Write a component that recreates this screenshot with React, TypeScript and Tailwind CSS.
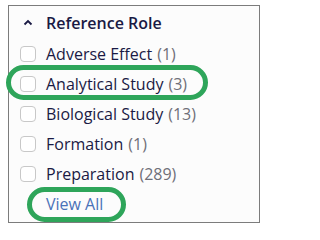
import React from "react";

const items = [
  { label: "Adverse Effect", count: 1 },
  { label: "Analytical Study", count: 3 },
  { label: "Biological Study", count: 13 },
  { label: "Formation", count: 1 },
  { label: "Preparation", count: 289 },
];

const FacetRow = ({ label, count }: { label: string; count: number }) => {
  return (
    <div className="flex h-[30px] items-center">
      <span className="ml-[11px] h-[16px] w-[16px] rounded-[4px] border border-[#c8c8c8] bg-white" />
      <span className="ml-[10px] text-[#1a1a44]">{label}</span>
      <span className="ml-[5px] text-[#6f6f78]">({count})</span>
    </div>
  );
};

export default function App() {
  return (
    <div className="min-h-[230px] bg-white pl-[8px] pt-[5px]">
      <div
        className="relative h-[218px] w-[252px] border border-[#7c7c7c] bg-[#fcfcfc] text-[16px]"
        style={{ fontFamily: '"Open Sans", sans-serif' }}
      >
        <div className="flex h-[33px] items-center">
          <svg width="10" height="7" viewBox="0 0 10 7" className="ml-[14px]">
            <polyline
              points="1.5,5.5 5,2 8.5,5.5"
              fill="none"
              stroke="#1a1a44"
              strokeWidth="1.8"
            />
          </svg>
          <span className="ml-[13px] font-semibold text-[#1a1a44]">Reference Role</span>
        </div>
        {items.map((item) => (
          <FacetRow key={item.label} label={item.label} count={item.count} />
        ))}
        <div className="flex h-[30px] items-center">
          <span className="ml-[37px] text-[#4a72b8]">View All</span>
        </div>

        {/* highlight rings */}
        <div className="absolute left-[-3px] top-[59px] h-[35px] w-[202px] rounded-full border-[5px] border-[#2ea55a]" />
        <div className="absolute left-[18px] top-[181px] h-[35px] w-[99px] rounded-full border-[5px] border-[#2ea55a]" />
      </div>
    </div>
  );
}
